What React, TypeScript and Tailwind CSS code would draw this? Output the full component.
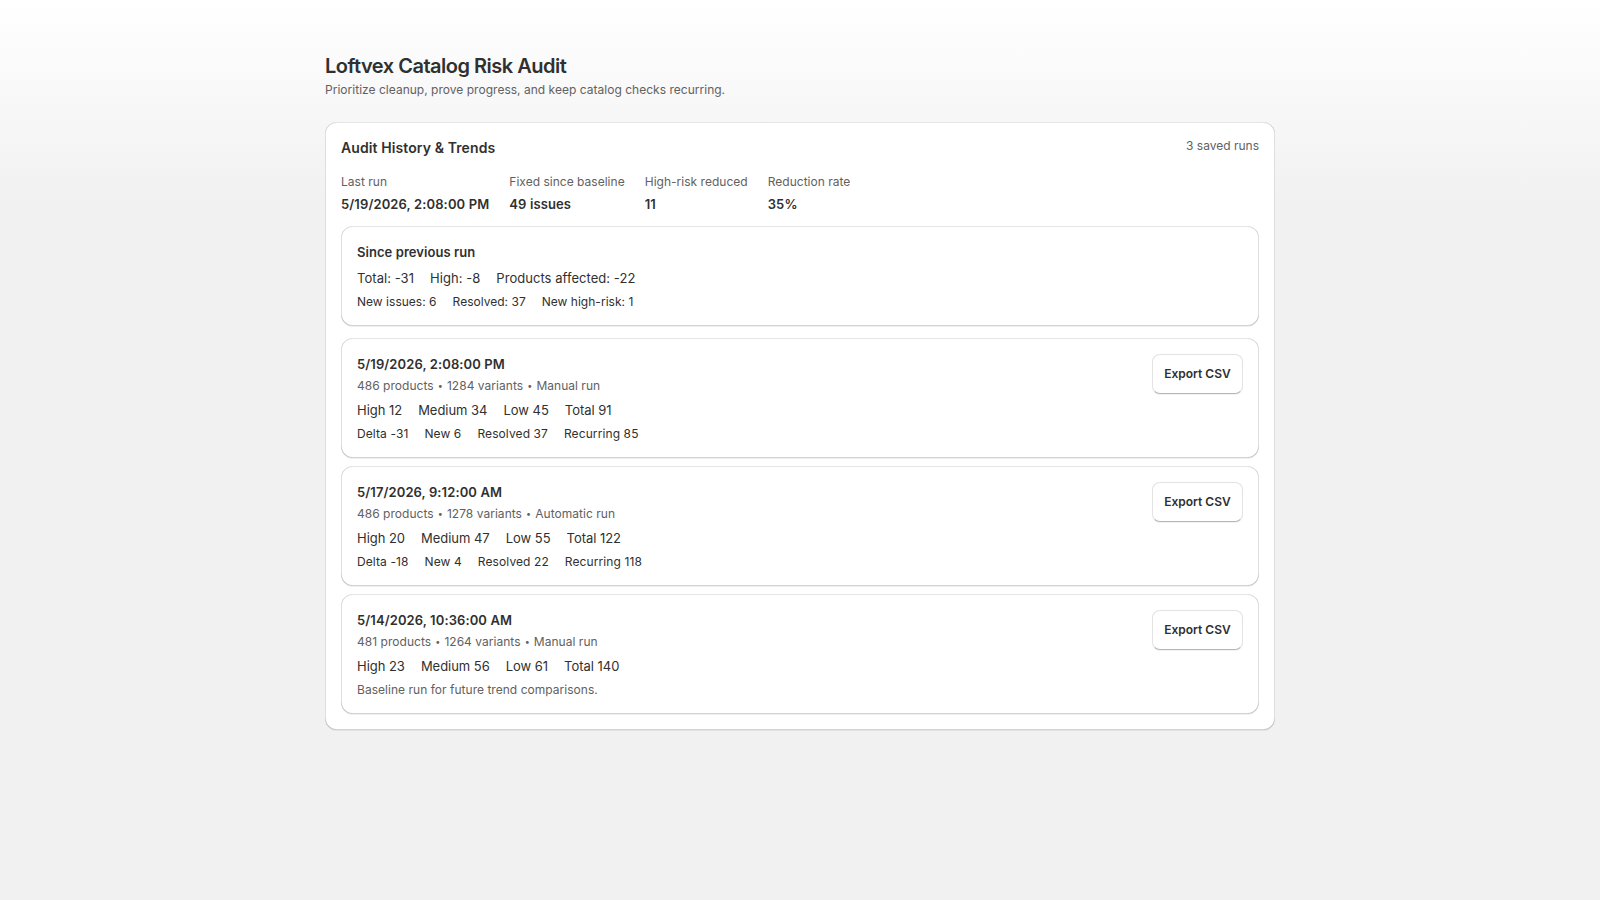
const shadow = "shadow-[0px_1px_0px_0px_rgba(26,26,26,0.07),inset_0px_1px_0px_0px_rgba(204,204,204,0.5),inset_0px_-1px_0px_0px_rgba(0,0,0,0.17),inset_-1px_0px_0px_0px_rgba(0,0,0,0.13),inset_1px_0px_0px_0px_rgba(0,0,0,0.13)]";

function Row({ items, className }: { items: string[]; className: string }) {
  return (
    <div className={"flex gap-4 text-[#303030] " + className}>
      {items.map((t) => (
        <span key={t}>{t}</span>
      ))}
    </div>
  );
}

function Run({ date, meta, row, second, note }: { date: string; meta: string[]; row: string[]; second?: string[]; note?: string }) {
  return (
    <div className={"flex h-[120px] justify-between rounded-xl bg-white p-4 " + shadow}>
      <div className="flex flex-col">
        <div className="text-[13px] font-semibold leading-5 tracking-[0.1px] text-[#303030]">{date}</div>
        <div className="mt-1 text-[12px] leading-4 tracking-[0.03px] text-[#616161]">
          {meta[0]} <span className="mx-[0.7px] align-[1px] text-[9px]">•</span> {meta[1]} <span className="mx-[0.7px] align-[1px] text-[9px]">•</span> {meta[2]}
        </div>
        <div className="mt-1.5"><Row items={row} className="text-[13px] leading-5 tracking-[-0.03px]" /></div>
        <div className="mt-1.5">
          {second ? (
            <Row items={second} className="text-[12px] leading-4 tracking-[0.1px]" />
          ) : (
            <div className="text-[12px] leading-4 tracking-[0.03px] text-[#616161]">{note}</div>
          )}
        </div>
      </div>
      <button className="h-10 w-[91px] rounded-lg border border-[#e3e3e3] border-b-[#b5b5b5] bg-white text-[12px] font-semibold text-[#303030] shadow-[0_1px_0_0_rgba(0,0,0,0.05)]">
        Export CSV
      </button>
    </div>
  );
}

const stats = [
  ["Last run", "5/19/2026, 2:08:00 PM"],
  ["Fixed since baseline", "49 issues"],
  ["High-risk reduced", "11"],
  ["Reduction rate", "35%"],
];

export default function App() {
  return (
    <div className="min-h-[900px] bg-[#f1f1f1] bg-gradient-to-b from-white to-[#f1f1f1] bg-[length:100%_205px] bg-no-repeat font-['Inter',sans-serif]">
      <div className="mx-auto w-[950px] pt-[54px]">
        <h1 className="text-[20px] font-semibold leading-6 tracking-[-0.5px] text-[#303030]">Loftvex Catalog Risk Audit</h1>
        <p className="mt-1 text-[12px] leading-4 tracking-[0.02px] text-[#616161]">Prioritize cleanup, prove progress, and keep catalog checks recurring.</p>
        <div className={"mt-6 rounded-xl bg-white p-4 " + shadow}>
          <div className="flex items-start justify-between">
            <h2 className="text-[14px] font-semibold leading-5 tracking-[0.1px] text-[#303030]">Audit History &amp; Trends</h2>
            <span className="text-[12px] leading-4 text-[#616161]">3 saved runs</span>
          </div>
          <div className="mt-4 flex gap-5">
            {stats.map(([a, b]) => (
              <div key={a}>
                <div className="text-[12px] leading-4 tracking-[0.02px] text-[#616161]">{a}</div>
                <div className="mt-1 text-[13px] font-semibold leading-5 tracking-[0.12px] text-[#303030]">{b}</div>
              </div>
            ))}
          </div>
          <div className="mt-3 flex flex-col">
            <div className={"h-[100px] rounded-xl bg-white p-4 " + shadow}>
              <div className="text-[13px] font-semibold leading-5 tracking-[0.06px] text-[#303030]">Since previous run</div>
              <div className="mt-1.5"><Row items={["Total: -31", "High: -8", "Products affected: -22"]} className="text-[13px] leading-5 tracking-[0.05px]" /></div>
              <div className="mt-1.5"><Row items={["New issues: 6", "Resolved: 37", "New high-risk: 1"]} className="text-[12px] leading-4 tracking-[0.02px]" /></div>
            </div>
            <div className="mt-3 flex flex-col gap-2">
              <Run date="5/19/2026, 2:08:00 PM" meta={["486 products", "1284 variants", "Manual run"]} row={["High 12", "Medium 34", "Low 45", "Total 91"]} second={["Delta -31", "New 6", "Resolved 37", "Recurring 85"]} />
              <Run date="5/17/2026, 9:12:00 AM" meta={["486 products", "1278 variants", "Automatic run"]} row={["High 20", "Medium 47", "Low 55", "Total 122"]} second={["Delta -18", "New 4", "Resolved 22", "Recurring 118"]} />
              <Run date="5/14/2026, 10:36:00 AM" meta={["481 products", "1264 variants", "Manual run"]} row={["High 23", "Medium 56", "Low 61", "Total 140"]} note="Baseline run for future trend comparisons." />
            </div>
          </div>
        </div>
      </div>
    </div>
  );
}
